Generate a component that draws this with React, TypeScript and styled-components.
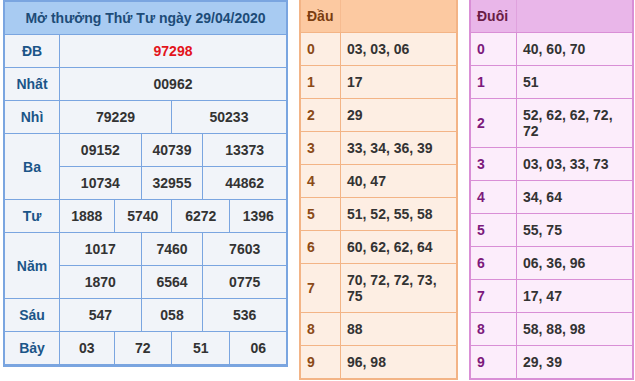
import React from "react";
import styled, { createGlobalStyle } from "styled-components";

const GlobalStyle = createGlobalStyle`
    body {
        margin: 0;
        background: #ffffff;
        font-family: "Liberation Sans", Arial, sans-serif;
    }
`;

const Page = styled.div`
    display: flex;
    align-items: flex-start;
    padding-left: 3px;
    gap: 11px;
    font-size: 14px;
    font-weight: bold;
    line-height: 16px;
`;

// ---- result table (blue) ----

const Result = styled.div`
    width: 281px;
    border: 2px solid #7aa5e0;
    border-bottom-width: 3px;
    background: #f1f4f9;
`;

const ResultHeader = styled.div`
    background: #a8cbf2;
    color: #1d4c78;
    text-align: center;
    padding: 8px 0 8px;
    border-bottom: 1px solid #7aa5e0;
`;

const Row = styled.div`
    display: grid;
    grid-template-columns: 55px 1fr;
    border-bottom: 1px solid #7aa5e0;
    &:last-child {
        border-bottom: none;
    }
`;

const Label = styled.div`
    display: flex;
    align-items: center;
    justify-content: center;
    color: #1b5588;
    border-right: 1px solid #7aa5e0;
`;

const SubRows = styled.div`
    display: flex;
    flex-direction: column;
`;

const SubRow = styled.div<{ $cols: string }>`
    display: grid;
    grid-template-columns: ${(p) => p.$cols};
    border-bottom: 1px solid #7aa5e0;
    &:last-child {
        border-bottom: none;
    }
`;

const Num = styled.div<{ $red?: boolean }>`
    text-align: center;
    padding: 8px 0;
    color: ${(p) => (p.$red ? "#e3141c" : "#333333")};
    border-right: 1px solid #7aa5e0;
    &:last-child {
        border-right: none;
    }
`;

// ---- dau / duoi tables ----

type Theme = {
    border: string;
    headLine: string;
    head: string;
    body: string;
    key: string;
    title: string;
};

const orange: Theme = {
    border: "#f3b486",
    headLine: "#f6bb90",
    head: "#fcc9a1",
    body: "#fdeee3",
    key: "#8b4a17",
    title: "#7a3d10",
};

const pink: Theme = {
    border: "#d98fd6",
    headLine: "#e0a2de",
    head: "#e9b6e9",
    body: "#fcedfb",
    key: "#7c1a7c",
    title: "#6a1d45",
};

const Side = styled.div<{ $t: Theme; $w: number }>`
    width: ${(p) => p.$w}px;
    border: 2px solid ${(p) => p.$t.border};
    border-top: none;
    background: ${(p) => p.$t.body};
`;

const SideRow = styled.div<{ $t: Theme; $key: number; $head?: boolean }>`
    display: grid;
    grid-template-columns: ${(p) => p.$key}px 1fr;
    background: ${(p) => (p.$head ? p.$t.head : "transparent")};
    border-bottom: 1px solid ${(p) => p.$t.border};
    &:last-child {
        border-bottom: none;
    }
`;

const SideKey = styled.div<{ $t: Theme; $head?: boolean }>`
    display: flex;
    align-items: center;
    padding: 8px 6px;
    color: ${(p) => (p.$head ? p.$t.title : p.$t.key)};
    border-right: 1px solid ${(p) => (p.$head ? p.$t.headLine : p.$t.border)};
`;

const SideVal = styled.div`
    padding: 8px 6px;
    color: #333333;
`;

type Prize = { label: string; rows: { cols: string; nums: string[] }[]; red?: boolean };

const prizes: Prize[] = [
    { label: "ĐB", red: true, rows: [{ cols: "1fr", nums: ["97298"] }] },
    { label: "Nhất", rows: [{ cols: "1fr", nums: ["00962"] }] },
    { label: "Nhì", rows: [{ cols: "113fr 115fr", nums: ["79229", "50233"] }] },
    {
        label: "Ba",
        rows: [
            { cols: "82fr 62fr 83fr", nums: ["09152", "40739", "13373"] },
            { cols: "82fr 62fr 83fr", nums: ["10734", "32955", "44862"] },
        ],
    },
    { label: "Tư", rows: [{ cols: "55fr 58fr 59fr 56fr", nums: ["1888", "5740", "6272", "1396"] }] },
    {
        label: "Năm",
        rows: [
            { cols: "82fr 62fr 83fr", nums: ["1017", "7460", "7603"] },
            { cols: "82fr 62fr 83fr", nums: ["1870", "6564", "0775"] },
        ],
    },
    { label: "Sáu", rows: [{ cols: "82fr 62fr 83fr", nums: ["547", "058", "536"] }] },
    { label: "Bảy", rows: [{ cols: "55fr 58fr 59fr 56fr", nums: ["03", "72", "51", "06"] }] },
];

const dau = [
    "03, 03, 06",
    "17",
    "29",
    "33, 34, 36, 39",
    "40, 47",
    "51, 52, 55, 58",
    "60, 62, 62, 64",
    "70, 72, 72, 73, 75",
    "88",
    "96, 98",
];

const duoi = [
    "40, 60, 70",
    "51",
    "52, 62, 62, 72, 72",
    "03, 03, 33, 73",
    "34, 64",
    "55, 75",
    "06, 36, 96",
    "17, 47",
    "58, 88, 98",
    "29, 39",
];

const SideTable = ({ title, data, t, w, keyW }: { title: string; data: string[]; t: Theme; w: number; keyW: number }) => (
    <Side $t={t} $w={w}>
        <SideRow $t={t} $key={keyW} $head>
            <SideKey $t={t} $head>{title}</SideKey>
            <SideVal />
        </SideRow>
        {data.map((v, i) => (
            <SideRow key={i} $t={t} $key={keyW}>
                <SideKey $t={t}>{i}</SideKey>
                <SideVal>{v}</SideVal>
            </SideRow>
        ))}
    </Side>
);

const App = () => {
    return (
        <Page>
            <GlobalStyle />
            <Result>
                <ResultHeader>Mở thưởng Thứ Tư ngày 29/04/2020</ResultHeader>
                {prizes.map((p) => (
                    <Row key={p.label}>
                        <Label>{p.label}</Label>
                        <SubRows>
                            {p.rows.map((r, i) => (
                                <SubRow key={i} $cols={r.cols}>
                                    {r.nums.map((n) => (
                                        <Num key={n} $red={p.red}>{n}</Num>
                                    ))}
                                </SubRow>
                            ))}
                        </SubRows>
                    </Row>
                ))}
            </Result>
            <SideTable title="Đầu" data={dau} t={orange} w={155} keyW={40} />
            <SideTable title="Đuôi" data={duoi} t={pink} w={161} keyW={46} />
        </Page>
    );
};

export default App;
